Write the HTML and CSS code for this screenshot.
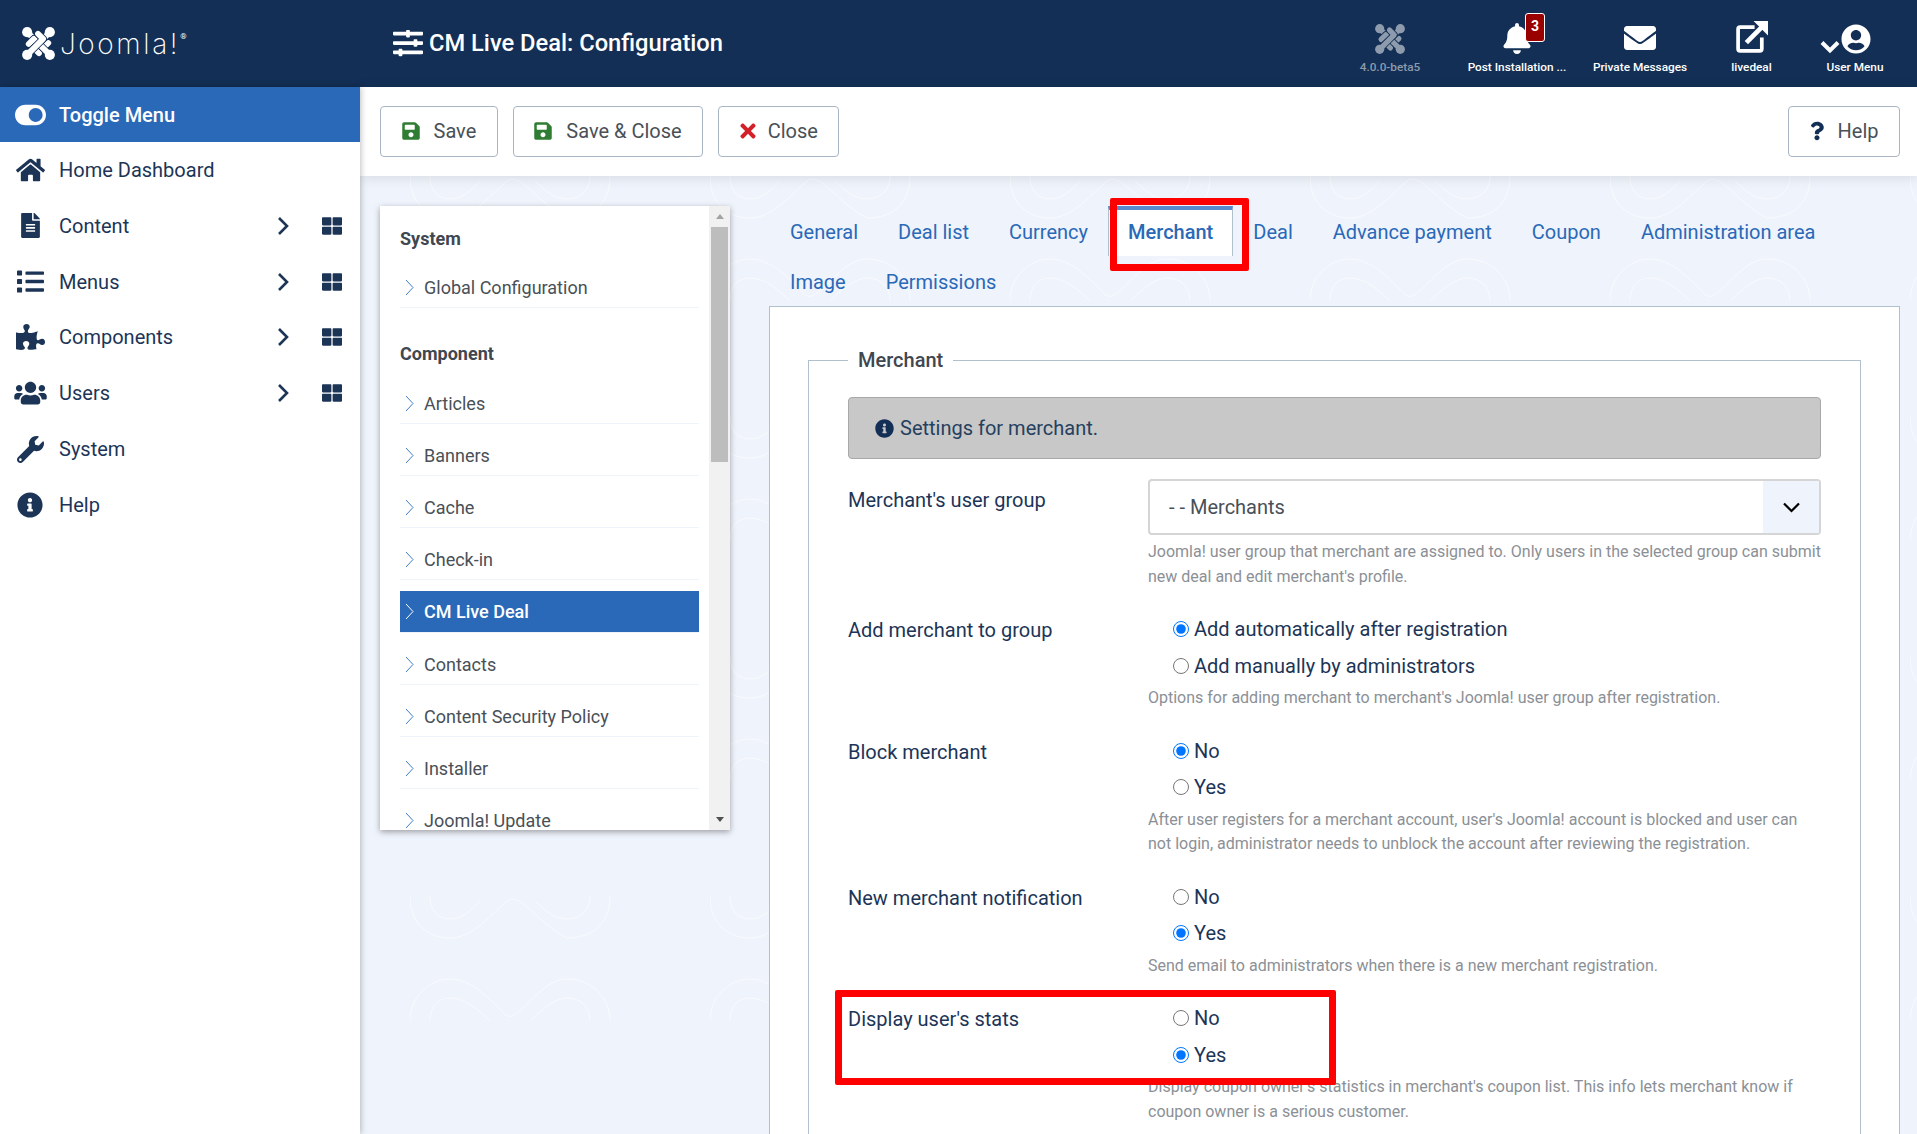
FILE: index.html
```html
<!DOCTYPE html>
<html>
<head>
	<title>CM Live Deal: Configuration</title>
	<link rel="stylesheet" href="styles.css">
</head>
<body>
	<svg class="defs" aria-hidden="true">
		<symbol id="i-knot" viewBox="0 0 32 32">
			<g fill="none" stroke-linecap="round" stroke-linejoin="round">
				<path class="knot-gap" d="M5 5 L20.5 20.5 L25.5 15.5"/><path class="knot-line" d="M5 5 L20.5 20.5 L25.5 15.5"/>
				<path class="knot-gap" d="M27 5 L11.5 20.5 L16.5 25.5"/><path class="knot-line" d="M27 5 L11.5 20.5 L16.5 25.5"/>
				<path class="knot-gap" d="M27 27 L11.5 11.5 L6.5 16.5"/><path class="knot-line" d="M27 27 L11.5 11.5 L6.5 16.5"/>
				<path class="knot-gap" d="M5 27 L20.5 11.5 L15.5 6.5"/><path class="knot-line" d="M5 27 L20.5 11.5 L15.5 6.5"/>
			</g>
			<circle cx="5" cy="5" r="4.9" fill="currentColor"/><circle cx="27" cy="5" r="4.9" fill="currentColor"/>
			<circle cx="5" cy="27" r="4.9" fill="currentColor"/><circle cx="27" cy="27" r="4.9" fill="currentColor"/>
		</symbol>
		<symbol id="i-sliders" viewBox="0 0 512 512"><path d="M496 384H160v-16c0-8.8-7.2-16-16-16h-32c-8.8 0-16 7.2-16 16v16H16c-8.8 0-16 7.2-16 16v32c0 8.8 7.2 16 16 16h80v16c0 8.8 7.2 16 16 16h32c8.8 0 16-7.2 16-16v-16h336c8.8 0 16-7.2 16-16v-32c0-8.8-7.2-16-16-16zm0-160h-80v-16c0-8.8-7.2-16-16-16h-32c-8.8 0-16 7.2-16 16v16H16c-8.8 0-16 7.2-16 16v32c0 8.8 7.2 16 16 16h336v16c0 8.8 7.2 16 16 16h32c8.8 0 16-7.2 16-16v-16h80c8.8 0 16-7.2 16-16v-32c0-8.8-7.2-16-16-16zm0-160H288V48c0-8.8-7.2-16-16-16h-32c-8.8 0-16 7.2-16 16v16H16C7.2 64 0 71.2 0 80v32c0 8.8 7.2 16 16 16h208v16c0 8.8 7.2 16 16 16h32c8.8 0 16-7.2 16-16v-16h208c8.8 0 16-7.2 16-16V80c0-8.8-7.2-16-16-16z"/></symbol>
		<symbol id="i-bell" viewBox="0 0 448 512"><path d="M224 512c35.32 0 63.97-28.65 63.97-64H160.03c0 35.35 28.65 64 63.97 64zm215.39-149.71c-19.32-20.76-55.47-51.99-55.47-154.29 0-77.7-54.48-139.9-127.94-155.16V32c0-17.67-14.32-32-31.98-32s-31.98 14.33-31.98 32v20.84C118.56 68.1 64.08 130.3 64.08 208c0 102.3-36.15 133.53-55.47 154.29-6 6.45-8.66 14.16-8.61 21.71.11 16.4 12.98 32 32.1 32h383.8c19.12 0 32-15.6 32.1-32 .05-7.55-2.61-15.27-8.61-21.71z"/></symbol>
		<symbol id="i-envelope" viewBox="0 0 512 512"><path d="M502.3 190.8c3.9-3.1 9.7-.2 9.7 4.7V400c0 26.5-21.5 48-48 48H48c-26.5 0-48-21.5-48-48V195.6c0-5 5.7-7.8 9.7-4.7 22.4 17.4 52.1 39.5 154.1 113.6 21.1 15.4 56.7 47.8 92.2 47.6 35.7.3 72-32.8 92.3-47.6 102-74.1 131.6-96.3 154-113.7zM256 320c23.2.4 56.6-29.2 73.4-41.4 132.7-96.3 142.8-104.7 173.4-128.7 5.8-4.5 9.2-11.5 9.2-18.9v-19c0-26.5-21.5-48-48-48H48C21.5 64 0 85.5 0 112v19c0 7.4 3.4 14.3 9.2 18.9 30.6 23.9 40.7 32.4 173.4 128.7 16.8 12.2 50.2 41.8 73.4 41.4z"/></symbol>
		<symbol id="i-user" viewBox="0 0 496 512"><path d="M248 8C111 8 0 119 0 256s111 248 248 248 248-111 248-248S385 8 248 8zm0 96c48.6 0 88 39.4 88 88s-39.4 88-88 88-88-39.4-88-88 39.4-88 88-88zm0 344c-58.7 0-111.3-26.6-146.5-68.2 18.8-35.4 55.6-59.8 98.5-59.8 2.4 0 4.8.4 7.1 1.1 13 4.2 26.6 6.9 40.9 6.9 14.3 0 28-2.7 40.9-6.9 2.3-.7 4.7-1.1 7.1-1.1 42.9 0 79.7 24.4 98.5 59.8C359.3 421.4 306.7 448 248 448z"/></symbol>
		<symbol id="i-toggle" viewBox="0 0 576 512"><path d="M384 64H192C86 64 0 150 0 256s86 192 192 192h192c106 0 192-86 192-192S490 64 384 64zm0 320c-70.8 0-128-57.3-128-128 0-70.8 57.3-128 128-128 70.8 0 128 57.3 128 128 0 70.8-57.3 128-128 128z"/></symbol>
		<symbol id="i-home" viewBox="0 0 576 512"><path d="M280.37 148.26L96 300.11V464a16 16 0 0 0 16 16l112.06-.29a16 16 0 0 0 15.92-16V368a16 16 0 0 1 16-16h64a16 16 0 0 1 16 16v95.64a16 16 0 0 0 16 16.05L464 480a16 16 0 0 0 16-16V300L295.67 148.26a12.19 12.19 0 0 0-15.3 0zM571.6 251.47L488 182.56V44.05a12 12 0 0 0-12-12h-56a12 12 0 0 0-12 12v72.61L318.47 43a48 48 0 0 0-61 0L4.34 251.47a12 12 0 0 0-1.6 16.9l25.5 31A12 12 0 0 0 45.15 301l235.22-193.74a12.19 12.19 0 0 1 15.3 0L530.9 301a12 12 0 0 0 16.9-1.6l25.5-31a12 12 0 0 0-1.7-16.93z"/></symbol>
		<symbol id="i-file" viewBox="0 0 384 512"><path d="M224 136V0H24C10.7 0 0 10.7 0 24v464c0 13.3 10.7 24 24 24h336c13.3 0 24-10.7 24-24V160H248c-13.2 0-24-10.8-24-24zm64 236c0 6.6-5.4 12-12 12H108c-6.6 0-12-5.4-12-12v-8c0-6.6 5.4-12 12-12h168c6.6 0 12 5.4 12 12v8zm0-64c0 6.6-5.4 12-12 12H108c-6.6 0-12-5.4-12-12v-8c0-6.6 5.4-12 12-12h168c6.6 0 12 5.4 12 12v8zm0-72v8c0 6.6-5.4 12-12 12H108c-6.6 0-12-5.4-12-12v-8c0-6.6 5.4-12 12-12h168c6.6 0 12 5.4 12 12zm96-114.1v6.1H256V0h6.1c6.4 0 12.5 2.5 17 7l97.9 98c4.5 4.5 7 10.6 7 16.9z"/></symbol>
		<symbol id="i-list" viewBox="0 0 512 512"><path d="M80 368H16a16 16 0 0 0-16 16v64a16 16 0 0 0 16 16h64a16 16 0 0 0 16-16v-64a16 16 0 0 0-16-16zm0-320H16A16 16 0 0 0 0 64v64a16 16 0 0 0 16 16h64a16 16 0 0 0 16-16V64a16 16 0 0 0-16-16zm0 160H16a16 16 0 0 0-16 16v64a16 16 0 0 0 16 16h64a16 16 0 0 0 16-16v-64a16 16 0 0 0-16-16zm416 176H176a16 16 0 0 0-16 16v32a16 16 0 0 0 16 16h320a16 16 0 0 0 16-16v-32a16 16 0 0 0-16-16zm0-320H176a16 16 0 0 0-16 16v32a16 16 0 0 0 16 16h320a16 16 0 0 0 16-16V80a16 16 0 0 0-16-16zm0 160H176a16 16 0 0 0-16 16v32a16 16 0 0 0 16 16h320a16 16 0 0 0 16-16v-32a16 16 0 0 0-16-16z"/></symbol>
		<symbol id="i-puzzle" viewBox="0 0 576 512"><path d="M519.442 288.651c-41.519 0-59.5 31.593-82.058 31.593C377.409 320.244 432 144 432 144s-196.288 80-196.288-3.297c0-35.827 36.288-46.25 36.288-85.985C272 19.216 243.885 0 210.539 0c-34.654 0-66.366 18.891-66.366 56.346 0 41.364 31.711 59.277 31.711 81.75C175.885 207.719 0 166.758 0 166.758v333.237s178.635 41.047 178.635-28.662c0-22.473-40-40.107-40-81.471 0-37.456 29.25-56.346 63.577-56.346 33.673 0 61.788 19.216 61.788 54.717 0 39.735-36.288 50.158-36.288 85.985 0 60.803 129.675 25.73 181.23 25.73 0 0-34.725-120.101 25.827-120.101 35.962 0 46.423 36.152 86.308 36.152C556.712 416 576 387.99 576 354.443c0-34.199-18.962-65.792-56.558-65.792z"/></symbol>
		<symbol id="i-users" viewBox="0 0 640 512"><path d="M96 224c35.3 0 64-28.7 64-64s-28.7-64-64-64-64 28.7-64 64 28.7 64 64 64zm448 0c35.3 0 64-28.7 64-64s-28.7-64-64-64-64 28.7-64 64 28.7 64 64 64zm32 32h-64c-17.6 0-33.5 7.1-45.1 18.6 40.3 22.1 68.9 62 75.1 109.4h66c17.7 0 32-14.3 32-32v-32c0-35.3-28.7-64-64-64zm-256 0c61.9 0 112-50.1 112-112S381.9 32 320 32 208 82.1 208 144s50.1 112 112 112zm76.8 32h-8.3c-20.8 10-43.9 16-68.5 16s-47.6-6-68.5-16h-8.3C179.6 288 128 339.6 128 403.2V432c0 26.5 21.5 48 48 48h288c26.5 0 48-21.5 48-48v-28.8c0-63.6-51.6-115.2-115.2-115.2zm-223.7-13.4C161.5 263.1 145.6 256 128 256H64c-35.3 0-64 28.7-64 64v32c0 17.7 14.3 32 32 32h65.9c6.3-47.4 34.9-87.3 75.2-109.4z"/></symbol>
		<symbol id="i-wrench" viewBox="0 0 512 512"><path d="M507.73 109.1c-2.24-9.03-13.54-12.09-20.12-5.51l-74.36 74.36-67.88-11.31-11.31-67.88 74.36-74.36c6.62-6.62 3.43-17.9-5.66-20.16-47.38-11.74-99.55.91-136.58 37.93-39.64 39.64-50.55 97.1-34.05 147.2L18.74 402.76c-24.99 24.99-24.99 65.51 0 90.5 24.99 24.99 65.51 24.99 90.5 0l213.21-213.21c50.12 16.71 107.47 5.68 147.37-34.22 37.07-37.07 49.7-89.32 37.91-136.73zM64 472c-13.25 0-24-10.75-24-24 0-13.26 10.75-24 24-24s24 10.74 24 24c0 13.25-10.75 24-24 24z"/></symbol>
		<symbol id="i-info" viewBox="0 0 512 512"><path d="M256 8C119.043 8 8 119.083 8 256c0 136.997 111.043 248 248 248s248-111.003 248-248C504 119.083 392.957 8 256 8zm0 110c23.196 0 42 18.804 42 42s-18.804 42-42 42-42-18.804-42-42 18.804-42 42-42zm56 254c0 6.627-5.373 12-12 12h-88c-6.627 0-12-5.373-12-12v-24c0-6.627 5.373-12 12-12h12v-64h-12c-6.627 0-12-5.373-12-12v-24c0-6.627 5.373-12 12-12h64c6.627 0 12 5.373 12 12v100h12c6.627 0 12 5.373 12 12v24z"/></symbol>
		<symbol id="i-grid" viewBox="0 0 512 512"><path d="M296 32h192c13.255 0 24 10.745 24 24v160c0 13.255-10.745 24-24 24H296c-13.255 0-24-10.745-24-24V56c0-13.255 10.745-24 24-24zm-80 0H24C10.745 32 0 42.745 0 56v160c0 13.255 10.745 24 24 24h192c13.255 0 24-10.745 24-24V56c0-13.255-10.745-24-24-24zM0 296v160c0 13.255 10.745 24 24 24h192c13.255 0 24-10.745 24-24V296c0-13.255-10.745-24-24-24H24c-13.255 0-24 10.745-24 24zm296 184h192c13.255 0 24-10.745 24-24V296c0-13.255-10.745-24-24-24H296c-13.255 0-24 10.745-24 24v160c0 13.255 10.745 24 24 24z"/></symbol>
		<symbol id="i-save" viewBox="0 0 448 512"><path d="M433.941 129.941l-83.882-83.882A48 48 0 0 0 316.118 32H48C21.49 32 0 53.49 0 80v352c0 26.51 21.49 48 48 48h352c26.51 0 48-21.49 48-48V163.882a48 48 0 0 0-14.059-33.941zM224 416c-35.346 0-64-28.654-64-64 0-35.346 28.654-64 64-64s64 28.654 64 64c0 35.346-28.654 64-64 64zm96-304.52V212c0 6.627-5.373 12-12 12H76c-6.627 0-12-5.373-12-12V108c0-6.627 5.373-12 12-12h228.52c3.183 0 6.235 1.264 8.485 3.515l3.48 3.48A11.996 11.996 0 0 1 320 111.48z"/></symbol>
		<symbol id="i-times" viewBox="0 0 352 512"><path d="M242.72 256l100.07-100.07c12.28-12.28 12.28-32.19 0-44.48l-22.24-22.24c-12.28-12.28-32.19-12.28-44.48 0L176 189.28 75.93 89.21c-12.28-12.28-32.19-12.28-44.48 0L9.21 111.45c-12.28 12.28-12.28 32.19 0 44.48L109.28 256 9.21 356.07c-12.28 12.28-12.28 32.19 0 44.48l22.24 22.24c12.28 12.28 32.2 12.28 44.48 0L176 322.72l100.07 100.07c12.28 12.28 32.2 12.28 44.48 0l22.24-22.24c12.28-12.28 12.28-32.19 0-44.48L242.72 256z"/></symbol>
		<symbol id="i-question" viewBox="0 0 384 512"><path d="M202.021 0C122.202 0 70.503 32.703 29.914 91.026c-7.363 10.58-5.093 25.086 5.178 32.874l43.138 32.709c10.373 7.865 25.132 6.026 33.253-4.148 25.049-31.381 43.63-49.449 82.757-49.449 30.764 0 68.816 19.799 68.816 49.631 0 22.552-18.617 34.134-48.993 51.164-35.423 19.86-82.299 44.576-82.299 106.405V320c0 13.255 10.745 24 24 24h72.471c13.255 0 24-10.745 24-24v-5.773c0-42.86 125.268-44.645 125.268-160.627C377.504 66.256 286.902 0 202.021 0zM192 373.459c-38.196 0-69.271 31.075-69.271 69.271 0 38.195 31.075 69.27 69.271 69.27s69.271-31.075 69.271-69.271-31.075-69.27-69.271-69.27z"/></symbol>
		<symbol id="i-chev" viewBox="0 0 12 20"><path d="M2 2 L10 10 L2 18" fill="none" stroke="currentColor" stroke-width="2.6"/></symbol>
		<symbol id="i-thin" viewBox="0 0 9 17"><path d="M1 1 L8 8.5 L1 16" fill="none" stroke="currentColor" stroke-width="1"/></symbol>
	</svg>

	<header class="topbar">
		<div class="brand">
			<svg class="brand-knot"><use href="#i-knot"/></svg>
			<span class="brand-word">Joomla!</span><span class="brand-reg">®</span>
		</div>
		<h1 class="page-title"><svg class="title-icon"><use href="#i-sliders"/></svg>CM Live Deal: Configuration</h1>
		<div class="top-items">
			<div class="top-item muted"><svg class="knot-small"><use href="#i-knot"/></svg><span>4.0.0-beta5</span></div>
			<div class="top-item">
				<div class="bell-wrap"><svg class="bell"><use href="#i-bell"/></svg><b class="badge">3</b></div>
				<span>Post Installation ...</span>
			</div>
			<div class="top-item"><svg class="envelope"><use href="#i-envelope"/></svg><span>Private Messages</span></div>
			<div class="top-item">
				<svg class="outlink" viewBox="0 0 32 32"><path d="M19 6H5a2 2 0 0 0-2 2v19a2 2 0 0 0 2 2h19a2 2 0 0 0 2-2V16" fill="none" stroke="currentColor" stroke-width="3.6"/><path d="M11 21 L26 6" fill="none" stroke="currentColor" stroke-width="4.6"/><path d="M18 0H32V14Z" fill="currentColor"/></svg>
				<span>livedeal</span>
			</div>
			<div class="top-item">
				<div class="user-wrap">
					<svg class="user-check" viewBox="0 0 20 14"><path d="M2 2.5 L10 10.5 L18 2.5" fill="none" stroke="currentColor" stroke-width="4"/></svg>
					<svg class="user"><use href="#i-user"/></svg>
				</div>
				<span>User Menu</span>
			</div>
		</div>
	</header>

	<div class="layout">
		<nav class="sidebar">
			<a class="side-toggle"><span class="side-icon"><svg class="ic-toggle"><use href="#i-toggle"/></svg></span>Toggle Menu</a>
			<a class="side-item"><span class="side-icon"><svg class="ic-home"><use href="#i-home"/></svg></span>Home Dashboard</a>
			<a class="side-item"><span class="side-icon"><svg class="ic-file"><use href="#i-file"/></svg></span>Content<svg class="side-chev"><use href="#i-chev"/></svg><svg class="side-grid"><use href="#i-grid"/></svg></a>
			<a class="side-item"><span class="side-icon"><svg class="ic-list"><use href="#i-list"/></svg></span>Menus<svg class="side-chev"><use href="#i-chev"/></svg><svg class="side-grid"><use href="#i-grid"/></svg></a>
			<a class="side-item"><span class="side-icon"><svg class="ic-puzzle"><use href="#i-puzzle"/></svg></span>Components<svg class="side-chev"><use href="#i-chev"/></svg><svg class="side-grid"><use href="#i-grid"/></svg></a>
			<a class="side-item"><span class="side-icon"><svg class="ic-users"><use href="#i-users"/></svg></span>Users<svg class="side-chev"><use href="#i-chev"/></svg><svg class="side-grid"><use href="#i-grid"/></svg></a>
			<a class="side-item"><span class="side-icon"><svg class="ic-wrench"><use href="#i-wrench"/></svg></span>System</a>
			<a class="side-item"><span class="side-icon"><svg class="ic-info"><use href="#i-info"/></svg></span>Help</a>
		</nav>

		<main class="main">
			<div class="toolbar">
				<button class="btn"><svg class="btn-save"><use href="#i-save"/></svg>Save</button>
				<button class="btn"><svg class="btn-save"><use href="#i-save"/></svg>Save &amp; Close</button>
				<button class="btn"><svg class="btn-close"><use href="#i-times"/></svg>Close</button>
				<button class="btn btn-help"><svg class="btn-q"><use href="#i-question"/></svg>Help</button>
			</div>

			<div class="content">
				<aside class="comp-panel">
					<div class="comp-list">
						<h3 class="comp-head first">System</h3>
						<ul>
							<li><a><svg class="thin"><use href="#i-thin"/></svg>Global Configuration</a></li>
						</ul>
						<h3 class="comp-head">Component</h3>
						<ul>
							<li><a><svg class="thin"><use href="#i-thin"/></svg>Articles</a></li>
							<li><a><svg class="thin"><use href="#i-thin"/></svg>Banners</a></li>
							<li><a><svg class="thin"><use href="#i-thin"/></svg>Cache</a></li>
							<li><a><svg class="thin"><use href="#i-thin"/></svg>Check-in</a></li>
							<li class="active"><a><svg class="thin"><use href="#i-thin"/></svg>CM Live Deal</a></li>
							<li><a><svg class="thin"><use href="#i-thin"/></svg>Contacts</a></li>
							<li><a><svg class="thin"><use href="#i-thin"/></svg>Content Security Policy</a></li>
							<li><a><svg class="thin"><use href="#i-thin"/></svg>Installer</a></li>
							<li><a><svg class="thin"><use href="#i-thin"/></svg>Joomla! Update</a></li>
						</ul>
					</div>
					<div class="fake-scroll">
						<span class="arrow-up"></span>
						<span class="thumb"></span>
						<span class="arrow-down"></span>
					</div>
				</aside>

				<section class="config">
					<div class="tabs">
						<a class="tab">General</a>
						<a class="tab">Deal list</a>
						<a class="tab">Currency</a>
						<a class="tab active">Merchant</a>
						<a class="tab">Deal</a>
						<a class="tab">Advance payment</a>
						<a class="tab">Coupon</a>
						<a class="tab">Administration area</a>
						<a class="tab">Image</a>
						<a class="tab">Permissions</a>
					</div>
					<div class="tab-body">
						<fieldset class="group">
							<legend>Merchant</legend>
							<div class="alert"><svg class="alert-icon"><use href="#i-info"/></svg>Settings for merchant.</div>

							<div class="row row-select">
								<label class="row-label">Merchant's user group</label>
								<div>
									<div class="select"><span>- - Merchants</span><span class="select-arrow"><svg viewBox="0 0 18 11"><path d="M1.5 1.5 L9 9 L16.5 1.5" fill="none" stroke="currentColor" stroke-width="2.2"/></svg></span></div>
									<p class="help help-select">Joomla! user group that merchant are assigned to. Only users in the selected group can submit new deal and edit merchant's profile.</p>
								</div>
							</div>

							<div class="row">
								<label class="row-label">Add merchant to group</label>
								<div>
									<label class="radio"><input type="radio" name="r1" checked>Add automatically after registration</label>
									<label class="radio"><input type="radio" name="r1">Add manually by administrators</label>
									<p class="help">Options for adding merchant to merchant's Joomla! user group after registration.</p>
								</div>
							</div>

							<div class="row">
								<label class="row-label">Block merchant</label>
								<div>
									<label class="radio"><input type="radio" name="r2" checked>No</label>
									<label class="radio"><input type="radio" name="r2">Yes</label>
									<p class="help">After user registers for a merchant account, user's Joomla! account is blocked and user can not login, administrator needs to unblock the account after reviewing the registration.</p>
								</div>
							</div>

							<div class="row">
								<label class="row-label">New merchant notification</label>
								<div>
									<label class="radio"><input type="radio" name="r3">No</label>
									<label class="radio"><input type="radio" name="r3" checked>Yes</label>
									<p class="help">Send email to administrators when there is a new merchant registration.</p>
								</div>
							</div>

							<div class="row">
								<label class="row-label">Display user's stats</label>
								<div>
									<label class="radio"><input type="radio" name="r4">No</label>
									<label class="radio"><input type="radio" name="r4" checked>Yes</label>
									<p class="help">Display coupon owner's statistics in merchant's coupon list. This info lets merchant know if coupon owner is a serious customer.</p>
								</div>
							</div>
						</fieldset>
					</div>
				</section>
			</div>
		</main>
	</div>

	<!-- red markers drawn over the screenshot -->
	<div class="marker marker-tab"></div>
	<div class="marker marker-stats"></div>
</body>
</html>
```

FILE: styles.css
```css
* {
	box-sizing: border-box;
}
html, body {
	margin: 0;
	height: 1134px;
	overflow: hidden;
}
body {
	position: relative;
	font-family: Roboto, "Liberation Sans", sans-serif;
	font-size: 20px;
	color: #1c3557;
	background: #eff3fb;
}
.defs {
	position: absolute;
	width: 0;
	height: 0;
}
svg {
	fill: currentColor;
	display: block;
	flex: none;
}
a {
	text-decoration: none;
}

/* top bar */
.topbar {
	height: 87px;
	background: #132f55;
	color: #fff;
	display: flex;
	align-items: center;
}
.knot-gap {
	stroke: #132f55;
	stroke-width: 7.4;
}
.knot-line {
	stroke: currentColor;
	stroke-width: 5.6;
}
.brand {
	width: 393px;
	padding-left: 22px;
	display: flex;
	align-items: center;
}
.brand-knot {
	width: 33px;
	height: 33px;
}
.brand-word {
	margin-left: 5px;
	font-family: Inter, Lato, sans-serif;
	font-weight: 200;
	font-size: 28px;
	line-height: 34px;
	letter-spacing: 2.6px;
}
.brand-reg {
	font-size: 8px;
	align-self: flex-start;
	margin-top: 5px;
}
.page-title {
	margin: -2px 0 0;
	display: flex;
	align-items: center;
	gap: 6px;
	font-size: 23.7px;
	font-weight: 500;
	flex: 1;
}
.title-icon {
	width: 30px;
	height: 30px;
}
.top-items {
	display: grid;
	grid-template-columns: 148px 106px 140px 83px 124px;
}
.top-item {
	display: flex;
	flex-direction: column;
	align-items: center;
	justify-content: flex-end;
	height: 60px;
	font-size: 11.8px;
	font-weight: 500;
	gap: 6px;
	white-space: nowrap;
}
.top-item.muted {
	color: #8d9bad;
}
.knot-small {
	width: 30px;
	height: 30px;
}
.bell-wrap {
	position: relative;
}
.bell {
	width: 28px;
	height: 31px;
}
.badge {
	position: absolute;
	left: 22px;
	top: -10px;
	width: 20px;
	height: 29px;
	background: #990000;
	border: 1px solid #fff;
	border-radius: 3px;
	font-size: 14px;
	line-height: 25px;
	text-align: center;
}
.envelope {
	width: 32px;
	height: 32px;
}
.outlink {
	width: 33px;
	height: 33px;
}
.user-wrap {
	display: flex;
	align-items: flex-end;
	margin-right: 20px;
}
.user-check {
	width: 20px;
	height: 14px;
	margin-right: 1px;
}
.user {
	width: 30px;
	height: 30px;
}

/* side menu */
.layout {
	display: flex;
	height: 1047px;
}
.sidebar {
	width: 360px;
	background: #fff;
	box-shadow: 1px 0 6px rgba(0, 0, 0, .25);
	position: relative;
	z-index: 2;
}
.side-toggle, .side-item {
	display: flex;
	align-items: center;
	font-size: 20px;
	padding-left: 15px;
}
.side-toggle {
	height: 55px;
	padding-top: 1px;
	background: #2a69b8;
	color: #fff;
	font-weight: 500;
}
.side-item {
	height: 55.85px;
	color: #1c3557;
}
.side-icon {
	width: 30px;
	margin-right: 14px;
	display: flex;
	justify-content: center;
}
.ic-toggle { width: 31px; height: 28px; }
.ic-home { width: 29px; height: 26px; }
.ic-file { width: 19px; height: 25px; }
.ic-list { width: 27px; height: 27px; }
.ic-puzzle { width: 29px; height: 26px; }
.ic-users { width: 33px; height: 26px; }
.ic-wrench { width: 27px; height: 27px; }
.ic-info { width: 26px; height: 26px; }
.side-chev {
	width: 12px;
	height: 20px;
	margin-left: auto;
}
.side-grid {
	width: 20px;
	height: 20px;
	margin: 0 18px 0 33px;
}

/* toolbar */
.main {
	flex: 1;
	display: flex;
	flex-direction: column;
	min-width: 0;
}
.toolbar {
	flex: none;
	height: 89px;
	background: #fff;
	display: flex;
	align-items: flex-start;
	gap: 15px;
	padding: 19px 17px 0 20px;
	box-shadow: 0 2px 12px rgba(0, 0, 0, .1);
	position: relative;
}
.btn {
	height: 51px;
	display: flex;
	align-items: center;
	gap: 14px;
	padding: 0 20.5px 1px;
	background: #fff;
	border: 1px solid #a9b5c3;
	border-radius: 4px;
	font-family: inherit;
	font-size: 20px;
	color: #495057;
}
.btn-help {
	margin-left: auto;
}
.btn-save {
	width: 18px;
	height: 20px;
	color: #2e7d32;
}
.btn-close {
	width: 16px;
	height: 22px;
	margin-right: -2px;
	color: #d32029;
}
.btn-q {
	width: 14px;
	height: 20px;
	color: #132f55;
}

/* page below the toolbar */
.content {
	flex: 1;
	display: flex;
	align-items: flex-start;
	padding: 0 17px 0 20px;
	gap: 39px;
	min-height: 0;
	background-color: #eff3fb;
	background-image: url("data:image/svg+xml,%3Csvg xmlns='http://www.w3.org/2000/svg' width='300' height='240'%3E%3Cg fill='none' stroke='%23ffffff' stroke-opacity='.55'%3E%3Cpath d='M0 0C0 30 20 42 40 42C60 42 75 25 97 5C110 -5 125 25 157 42C180 42 200 30 200 0'/%3E%3Cpath d='M20 0C20 15 28 23 40 23C52 23 60 15 70 5'/%3E%3Cpath d='M180 0C180 15 170 23 157 23C145 23 135 15 125 5'/%3E%3Cpath d='M0 125C0 100 20 83 40 83C65 83 85 110 97 120C110 125 130 83 157 83C180 83 200 100 200 125'/%3E%3Cpath d='M20 125C20 110 28 102 40 102C55 102 70 115 80 125'/%3E%3Cpath d='M180 125C180 110 170 102 157 102C145 102 130 115 120 125'/%3E%3C/g%3E%3C/svg%3E");
	background-position: 50px 0;
}
.comp-panel {
	width: 350px;
	height: 624px;
	margin-top: 30px;
	background: #fff;
	display: flex;
	overflow: hidden;
	box-shadow: 0 2px 6px rgba(0, 0, 0, .35);
	flex: none;
}
.comp-list {
	flex: 1;
	padding: 18px 10px 0 20px;
	overflow: hidden;
	min-width: 0;
}
.comp-head {
	margin: 31px 0 3px;
	font-size: 18px;
	font-weight: 700;
	line-height: 30px;
	color: #3f4750;
}
.comp-head.first {
	margin: 0 0 2px;
}
.comp-list ul {
	list-style: none;
	margin: 0;
	padding: 0;
}
.comp-list li {
	height: 52.1px;
	padding-top: 11px;
	border-bottom: 1px solid #eff3fb;
}
.comp-list a {
	display: flex;
	align-items: center;
	height: 41px;
	padding-left: 5px;
	font-size: 18px;
	color: #495057;
}
.comp-list li.active a {
	background: #2a69b8;
	color: #fff;
	font-weight: 500;
}
.thin {
	width: 9px;
	height: 17px;
	margin-right: 10px;
	color: #3f7dca;
}
.active .thin {
	color: #fff;
}
.fake-scroll {
	width: 21px;
	background: #f1f1f1;
	display: flex;
	flex-direction: column;
	align-items: center;
	position: relative;
}
.arrow-up {
	margin-top: 8px;
	border: 4.5px solid transparent;
	border-top: 0;
	border-bottom: 5px solid #a3a3a3;
}
.thumb {
	width: 17px;
	height: 235px;
	margin-top: 8px;
	background: #bdbdbd;
}
.arrow-down {
	margin-top: auto;
	margin-bottom: 8px;
	border: 4.5px solid transparent;
	border-bottom: 0;
	border-top: 5px solid #505050;
}

/* tabs and form */
.config {
	flex: 1;
	min-width: 0;
	padding-top: 30px;
}
.tabs {
	display: flex;
	flex-wrap: wrap;
	padding-left: 1px;
}
.tab {
	height: 50px;
	padding: 14px 20px 0;
	font-size: 20px;
	color: #2a69b8;
}
.tab.active {
	background: #fff;
	font-weight: 500;
	border: 1px solid #b2bfcd;
	border-width: 0 1px;
	border-top: 4px solid #5a8acb;
	padding: 10px 19px 0;
}
.tab-body {
	background: #fff;
	border: 1px solid #b2bfcd;
	padding: 41px 38px 0;
}
.group {
	margin: 0;
	padding: 25px 39px 0 39px;
	border: 1px solid #b2bfcd;
	border-bottom: 0;
	min-width: 0;
}
.group legend {
	padding: 0 10px;
	font-size: 20px;
	font-weight: 500;
	color: #3f4750;
	line-height: 24px;
}
.alert {
	height: 62px;
	display: flex;
	align-items: center;
	padding-left: 26px;
	background: #c8c8c8;
	border: 1px solid #a8a8a8;
	border-radius: 4px;
	font-size: 20px;
	color: #26405f;
	margin-bottom: 20px;
}
.alert-icon {
	width: 19px;
	height: 19px;
	margin-right: 6px;
	color: #132f55;
}
.row {
	display: grid;
	grid-template-columns: 300px 1fr;
	margin-bottom: 22px;
}
.row-label {
	font-size: 20px;
	line-height: 38px;
	color: #1c3557;
}
.row-select .row-label {
	line-height: 42px;
}
.select {
	height: 56px;
	display: flex;
	justify-content: space-between;
	align-items: center;
	padding-left: 19px;
	border: 2px solid #d5d5d5;
	border-radius: 4px;
	font-size: 20px;
	color: #495057;
	background: #fff;
}
.select-arrow {
	width: 56px;
	align-self: stretch;
	background: #eff3fb;
	display: flex;
	justify-content: center;
	align-items: center;
	color: #000;
}
.select-arrow svg {
	width: 19px;
	height: 11px;
}
.radio {
	display: flex;
	align-items: center;
	height: 36.5px;
	padding-left: 25px;
	font-size: 20px;
	color: #1c3557;
}
.radio input {
	width: 16px;
	height: 16px;
	margin: 0 5px 0 0;
	accent-color: #0075ff;
}
.help {
	margin: 2px 0 0;
	font-size: 16px;
	line-height: 24.5px;
	color: #8b9096;
}
.help-select {
	margin-top: 5px;
}

/* red rectangles */
.marker {
	position: absolute;
	border: 7px solid #f00;
	border-radius: 2px;
}
.marker-tab {
	left: 1110px;
	top: 198px;
	width: 139px;
	height: 73px;
}
.marker-stats {
	left: 835px;
	top: 990px;
	width: 501px;
	height: 95px;
}
```
